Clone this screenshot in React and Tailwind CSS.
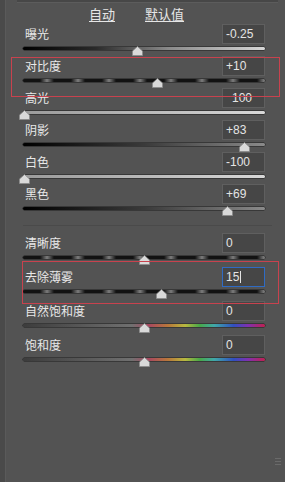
import React from "react";

const FONT = { fontFamily: '"Noto Sans CJK SC", "Noto Sans", sans-serif' };
const NUM = { fontFamily: '"Liberation Sans", "DejaVu Sans", sans-serif' };

const TRACKS = {
  exposure: "bg-[linear-gradient(90deg,#000000_0%,#2a2a2a_30%,#8a8a8a_60%,#d6d6d6_100%)]",
  dashed: "bg-[repeating-linear-gradient(90deg,#121212_0px,#121212_17px,#7c7c7c_24px,#121212_31px)]",
  light: "bg-[linear-gradient(90deg,#9a9a9a_0%,#d8d8d8_100%)]",
  dark: "bg-[linear-gradient(90deg,#000000_0%,#3a3a3a_50%,#8a8a8a_100%)]",
  rainbow:
    "bg-[linear-gradient(90deg,#3c3c3c_0%,#707070_45%,#a84860_52%,#b8783a_60%,#b8b840_67%,#48a848_73%,#40a8a8_79%,#3050c0_87%,#8030b0_93%,#c02050_100%)]",
};

function Thumb({ pos }) {
  return (
    <svg
      width="11"
      height="10"
      viewBox="0 0 11 10"
      className="absolute top-[-1px]"
      style={{ left: `calc(${pos}% - 5.5px)` }}
    >
      <polygon points="5.5,0.5 10.5,5 10.5,9.5 0.5,9.5 0.5,5" fill="#d9d9d9" stroke="#8a8a8a" strokeWidth="0.8" />
    </svg>
  );
}

function Row({ label, value, pos, track, h, active, valueClass }) {
  return (
    <div className={`flex flex-col ${h}`}>
      <div className="flex items-center justify-between h-[20px]">
        <span className="pl-[2px] text-[12px] leading-none text-[#e8e8e8]" style={FONT}>
          {label}
        </span>
        <div
          className={`w-[43px] h-[20px] flex items-center ${valueClass || "pl-[3px]"} bg-[#464646] border ${
            active ? "border-[#2f6bc4]" : "border-[#5f5f5f]"
          }`}
        >
          <span className="text-[12px] leading-none text-[#e4e4e4]" style={NUM}>
            {value}
          </span>
          {active && <span className="ml-[1px] w-px h-[12px] bg-[#e4e4e4]" />}
        </div>
      </div>
      <div className={`relative mt-[3px] h-[3px] rounded-full ${TRACKS[track]} shadow-[0_0_0_0.5px_#1e1e1e]`}>
        <Thumb pos={pos} />
      </div>
    </div>
  );
}

export default function App() {
  const top = [
    { label: "曝光", value: "-0.25", pos: 47.5, track: "exposure" },
    { label: "对比度", value: "+10", pos: 55.4, track: "dashed" },
    { label: "高光", value: "100", pos: 0.8, track: "light", valueClass: "pl-[9px]" },
    { label: "阴影", value: "+83", pos: 91.7, track: "dark" },
    { label: "白色", value: "-100", pos: 0.8, track: "light" },
    { label: "黑色", value: "+69", pos: 84.7, track: "dark" },
  ];
  const bottom = [
    { label: "清晰度", value: "0", pos: 50, track: "dashed" },
    { label: "去除薄雾", value: "15", pos: 57.4, track: "dashed", active: true },
    { label: "自然饱和度", value: "0", pos: 50.2, track: "rainbow" },
    { label: "饱和度", value: "0", pos: 50.2, track: "rainbow" },
  ];
  return (
    <div className="relative w-[285px] h-[482px] bg-[#535353] flex overflow-hidden">
      <div className="w-[6px] h-full bg-[#4a4a4a] border-r border-[#5a5a5a]" />
      <div className="flex-1 flex flex-col">
        <div className="h-[3px] ml-[11px] mr-[7px] bg-[#474747] border-b border-[#5c5c5c]" />
        <div className="h-[21px] flex items-center pl-[83px] gap-[30px] text-[13px] text-[#e6e6e6]" style={FONT}>
          <span className="underline underline-offset-2 leading-none">自动</span>
          <span className="underline underline-offset-2 leading-none">默认值</span>
        </div>
        <div className="pl-[17px] w-[259px] flex flex-col">
          {top.map((r) => (
            <Row key={r.label} {...r} h="h-[32px]" />
          ))}
          <div className="mt-[9px] mb-[7px] h-px w-[249px] bg-[#4a4a4a]" />
          {bottom.map((r) => (
            <Row key={r.label} {...r} h="h-[34px]" />
          ))}
        </div>
      </div>
      <div className="absolute left-[11px] top-[57px] w-[269px] h-[40px] border border-[#c8424e]" />
      <div className="absolute left-[22px] top-[261px] w-[257px] h-[43px] border border-[#c8424e]" />
      <div className="absolute left-[275px] top-[458px] flex flex-col gap-[2px]">
        <div className="w-[6px] h-px bg-[#6a6a6a]" />
        <div className="w-[6px] h-px bg-[#6a6a6a]" />
        <div className="w-[6px] h-px bg-[#6a6a6a]" />
      </div>
    </div>
  );
}
